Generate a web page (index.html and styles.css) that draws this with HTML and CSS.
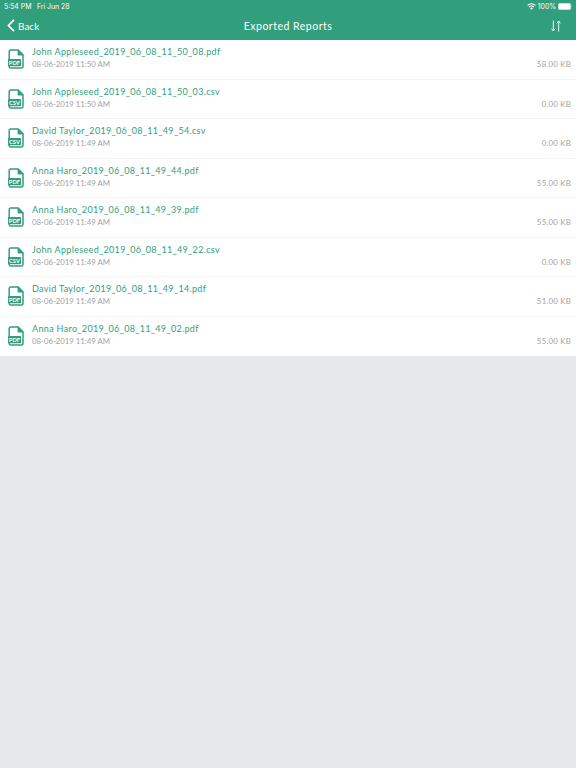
FILE: index.html
```html
<!DOCTYPE html>
<html>
    <head>
        <meta charset="utf-8">
        <title>Exported Reports</title>
        <link rel="stylesheet" href="styles.css">
    </head>
    <body>
        <!-- file icons, used by the rows below -->
        <svg class="defs">
            <symbol id="file" viewBox="0 0 16 20">
                <path d="M1.2 11V2.6Q1.2 1 2.8 1H10.2L15 5.8V17.4Q15 19 13.4 19H2.8Q1.2 19 1.2 17.4V16" fill="none" stroke="#319e7c" stroke-width="1.5"/>
                <path d="M9.6 .4L15.6 6.6H11Q9.6 6.6 9.6 5.2Z" fill="#319e7c"/>
                <rect x="0" y="10" width="13" height="7.2" rx=".8" fill="#319e7c"/>
            </symbol>
            <symbol id="pdf" viewBox="0 0 16 20">
                <use href="#file"/>
                <text x="6.5" y="15.7" class="ext">PDF</text>
            </symbol>
            <symbol id="csv" viewBox="0 0 16 20">
                <use href="#file"/>
                <text x="6.5" y="15.7" class="ext">CSV</text>
            </symbol>
        </svg>

        <header>
            <div class="status">
                <span class="time">5:54 PM</span>
                <span class="date">Fri Jun 28</span>
                <svg class="wifi" width="9" height="7" viewBox="0 0 9 7">
                    <path d="M.5 2.4Q4.5-1 8.5 2.4M1.9 4Q4.5 1.9 7.1 4" fill="none" stroke="#fff" stroke-width="1.1"/>
                    <path d="M3 5.2Q4.5 4 6 5.2L4.5 6.8Z" fill="#fff"/>
                </svg>
                <span class="percent">100%</span>
                <svg width="15" height="7" viewBox="0 0 15 7">
                    <rect x=".25" y=".25" width="12.5" height="6.5" rx="1.6" fill="#fff" stroke="#b5dccf" stroke-width=".5"/>
                    <path d="M13.5 2.2Q14.6 3.5 13.5 4.8Z" fill="#b5dccf"/>
                </svg>
            </div>
            <div class="nav">
                <a class="back">
                    <svg width="8" height="13" viewBox="0 0 8 13">
                        <path d="M7 .8L1.4 6.5L7 12.2" fill="none" stroke="#fff" stroke-width="1.7"/>
                    </svg>
                    <span>Back</span>
                </a>
                <h1>Exported Reports</h1>
                <svg class="sort" width="10" height="12" viewBox="0 0 10 12">
                    <path d="M2.3 .5V11M.4 8.6L2.3 11L4.2 8.6M7.7 11.5V1M5.8 3.4L7.7 1L9.6 3.4" fill="none" stroke="#fff" stroke-width=".9"/>
                </svg>
            </div>
        </header>

        <div class="reports">
            <div class="report">
                <svg class="icon"><use href="#pdf"/></svg>
                <div class="info">
                    <div class="name">John Appleseed_2019_06_08_11_50_08.pdf</div>
                    <div class="when">08-06-2019 11:50 AM</div>
                </div>
                <div class="size">58.00 KB</div>
            </div>
            <div class="report">
                <svg class="icon"><use href="#csv"/></svg>
                <div class="info">
                    <div class="name">John Appleseed_2019_06_08_11_50_03.csv</div>
                    <div class="when">08-06-2019 11:50 AM</div>
                </div>
                <div class="size">0.00 KB</div>
            </div>
            <div class="report">
                <svg class="icon"><use href="#csv"/></svg>
                <div class="info">
                    <div class="name">David Taylor_2019_06_08_11_49_54.csv</div>
                    <div class="when">08-06-2019 11:49 AM</div>
                </div>
                <div class="size">0.00 KB</div>
            </div>
            <div class="report">
                <svg class="icon"><use href="#pdf"/></svg>
                <div class="info">
                    <div class="name">Anna Haro_2019_06_08_11_49_44.pdf</div>
                    <div class="when">08-06-2019 11:49 AM</div>
                </div>
                <div class="size">55.00 KB</div>
            </div>
            <div class="report">
                <svg class="icon"><use href="#pdf"/></svg>
                <div class="info">
                    <div class="name">Anna Haro_2019_06_08_11_49_39.pdf</div>
                    <div class="when">08-06-2019 11:49 AM</div>
                </div>
                <div class="size">55.00 KB</div>
            </div>
            <div class="report">
                <svg class="icon"><use href="#csv"/></svg>
                <div class="info">
                    <div class="name">John Appleseed_2019_06_08_11_49_22.csv</div>
                    <div class="when">08-06-2019 11:49 AM</div>
                </div>
                <div class="size">0.00 KB</div>
            </div>
            <div class="report">
                <svg class="icon"><use href="#pdf"/></svg>
                <div class="info">
                    <div class="name">David Taylor_2019_06_08_11_49_14.pdf</div>
                    <div class="when">08-06-2019 11:49 AM</div>
                </div>
                <div class="size">51.00 KB</div>
            </div>
            <div class="report">
                <svg class="icon"><use href="#pdf"/></svg>
                <div class="info">
                    <div class="name">Anna Haro_2019_06_08_11_49_02.pdf</div>
                    <div class="when">08-06-2019 11:49 AM</div>
                </div>
                <div class="size">55.00 KB</div>
            </div>
        </div>
    </body>
</html>
```
FILE: styles.css
```css
* {
    box-sizing: border-box;
}

body {
    margin: 0;
    background-color: #e6e8e9;
    font-family: "Lato", sans-serif;
}

.defs {
    display: none;
}

header {
    height: 40px;
    background-color: #319e7c;
    color: #ffffff;
}

.status {
    display: flex;
    align-items: center;
    height: 12px;
    padding: 0 3px 0 4px;
    font-family: "Inter", sans-serif;
    font-size: 6.9px;
}

.date {
    margin-left: 5.5px;
}

.wifi {
    margin-left: auto;
    margin-right: 2px;
}

.percent {
    margin-right: 2px;
}

.nav {
    display: grid;
    grid-template-columns: 1fr auto 1fr;
    align-items: center;
    height: 27px;
    padding: 0 15px 0 7px;
}

.back {
    display: flex;
    align-items: center;
    gap: 3px;
    font-size: 10px;
}

.nav h1 {
    margin: 0 0 0 8px;
    font-size: 10.5px;
    font-weight: normal;
    letter-spacing: 0.5px;
}

.sort {
    justify-self: end;
}

.reports {
    background-color: #ffffff;
}

.report {
    display: flex;
    height: 39.5px;
    padding: 0 5px 0 8px;
    border-bottom: 1px solid #f2f4f4;
}

.report:last-child {
    border-bottom: none;
}

.icon {
    width: 16px;
    height: 20px;
    margin-top: 9px;
}

.ext {
    fill: #ffffff;
    font-size: 5.8px;
    font-weight: bold;
    text-anchor: middle;
}

.info {
    flex: 1;
    margin-left: 8px;
    padding-top: 6px;
}

.name {
    color: #319e7c;
    font-size: 9px;
    line-height: 12px;
    letter-spacing: 0.34px;
}

.when,
.size {
    color: #a3a3a3;
    font-size: 7.8px;
    line-height: 12px;
}

.when {
    letter-spacing: -0.02px;
}

.size {
    margin-top: 18px;
    letter-spacing: 0.25px;
}
```
